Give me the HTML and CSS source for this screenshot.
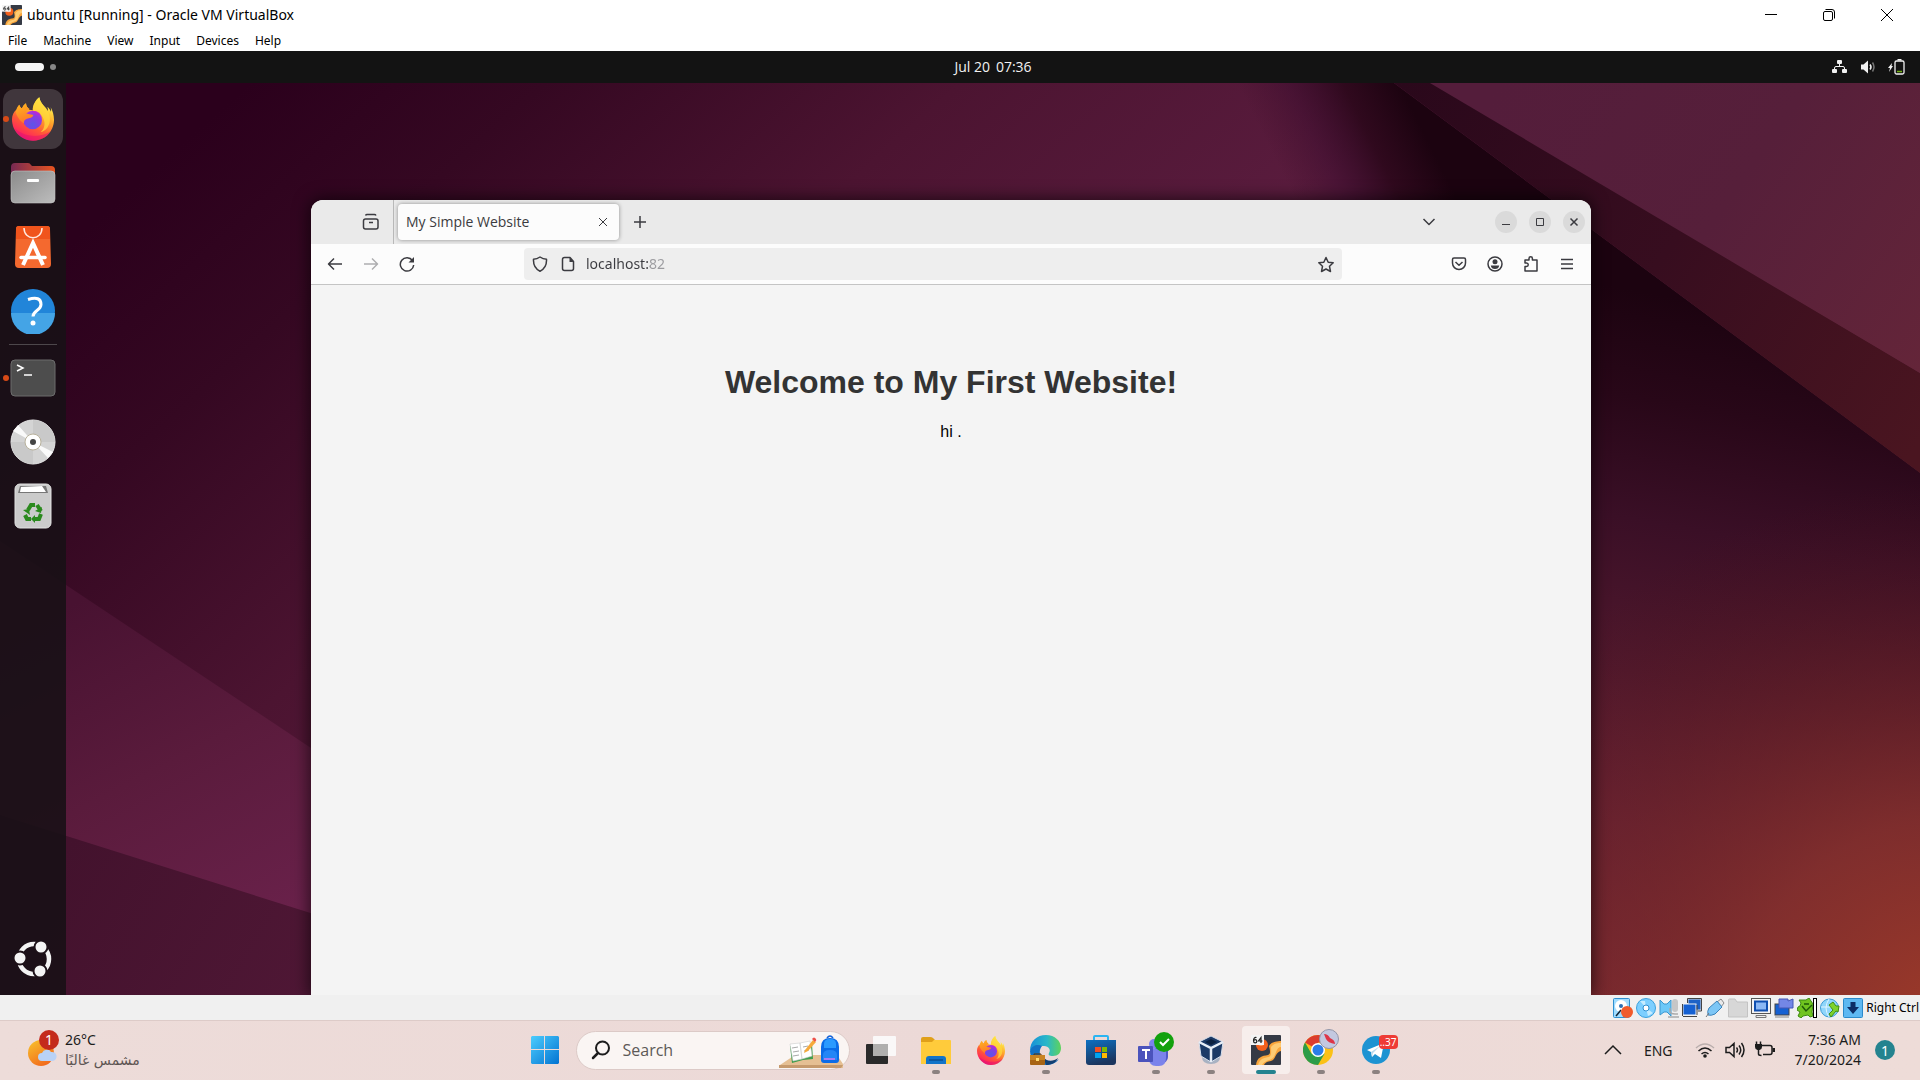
FILE: index.html
```html
<!DOCTYPE html>
<html lang="en">
<head>
<meta charset="utf-8">
<title>ubuntu [Running] - Oracle VM VirtualBox</title>
<link rel="stylesheet" href="styles.css">
</head>
<body>
<svg class="defs" width="0" height="0" aria-hidden="true">
  <defs>
    <linearGradient id="ffBody" x1="0.8" y1="0" x2="0.25" y2="1"><stop offset="0.1" stop-color="#fff44f"/><stop offset="0.4" stop-color="#ffa52a"/><stop offset="0.65" stop-color="#ff5a36"/><stop offset="0.85" stop-color="#ff2f55"/><stop offset="1" stop-color="#e0108a"/></linearGradient>
    <radialGradient id="ffGlobe" cx="0.5" cy="0.75" r="0.8"><stop offset="0" stop-color="#5c55e8"/><stop offset="0.6" stop-color="#8a3be0"/><stop offset="1" stop-color="#b833e1"/></radialGradient>
    <linearGradient id="ffHead" x1="0" y1="0" x2="0.3" y2="1"><stop offset="0" stop-color="#ffb61e"/><stop offset="1" stop-color="#ff7a2a"/></linearGradient>
  </defs>
  <symbol id="firefox" viewBox="0 0 126 130">
    <path fill="url(#ffBody)" d="M22 22c2 7 5 10 8 11 3-7 7-12 12-15 0 8 5 14 10 19l10 2C62 22 72 8 82 0c2 14 11 23 20 33l5 9c1-5 1-9-1-14 5 3 8 9 11 15 1-5 0-9-1-13 10 18 14 42 5 62-11 25-33 38-58 38C28 130 0 102 0 66c0-12 5-21 11-28 1 3 1 5 2 6 1-8 4-16 9-22z"/>
    <path fill="#ffd93b" opacity=".75" d="M82 0c2 14 11 23 20 33 14 18 16 42 4 58-6 8-14 12-20 13 14-10 16-34 2-50-8-7-20-10-25-15C62 22 72 8 82 0z"/>
    <circle cx="62" cy="68" r="28" fill="url(#ffGlobe)"/>
    <path fill="url(#ffHead)" d="M22 22c2 7 5 10 8 11 3-7 7-12 12-15 0 8 5 14 11 17-9 1-12 7-12 12 7 5 15 3 23 6-2 8-12 10-19 11-7 2-10 7-9 14-8-4-20-16-25-34 1-8 5-16 11-22z"/>
    <path fill="#c21fd0" opacity=".6" d="M60 42c14-4 26 4 29 16-6-6-11-6-16-5z"/>
    <path fill="#e4106f" opacity=".5" d="M8 92c20 24 74 34 108 10-12 19-31 28-53 28-24 0-44-13-55-38z"/>
  </symbol>
  <symbol id="vmlogo" viewBox="0 0 30 30">
    <rect width="30" height="30" rx="1" fill="#353a45"/>
    <path d="M5 30c1-8 6-9 12-10 3-1 2-5 1-9 2-4 8-5 12-5v10c-5 1-5 6-8 9-3 2-7 1-9 5z" fill="#f9a53c"/>
    <path d="M7 30c2-7 6-7 11-8 3-2 2-6 2-10 3-4 7-4 10-4v4c-5 0-5 8-8 11-4 3-8 2-11 7z" fill="#ffdc8c" opacity=".7"/>
    <circle cx="11" cy="10" r="6" fill="#f4601c"/><circle cx="10" cy="8" r="3" fill="#ff9a5c"/>
    <rect width="13" height="10" fill="#f4f4f4"/>
    <path d="M5.500 2.500Q2.500 2 2.500 6M10 8V2.500L7.500 6H11.500" stroke="#222" stroke-width="1.200" fill="none"/><circle cx="4.200" cy="6.200" r="1.600" stroke="#222" stroke-width="1.200" fill="none"/>
  </symbol>
</svg>

<header class="host-title">
  <svg class="host-logo" viewBox="0 0 30 30" width="20" height="20"><use href="#vmlogo"/></svg>
  <span class="host-name">ubuntu [Running] - Oracle VM VirtualBox</span>
  <div class="host-controls">
    <button aria-label="Minimize"><svg width="16" height="16" viewBox="0 0 16 16"><path d="M2 7.500h12" class="ln"/></svg></button>
    <button aria-label="Restore"><svg width="16" height="16" viewBox="0 0 16 16"><rect x="2.500" y="4.500" width="9" height="9" rx="1.500" class="ln"/><path d="M4.500 2.500h6.500a2.500 2.500 0 0 1 2.500 2.500v6.500" class="ln"/></svg></button>
    <button aria-label="Close"><svg width="16" height="16" viewBox="0 0 16 16"><path d="M2 2l12 12M14 2L2 14" class="ln"/></svg></button>
  </div>
</header>
<nav class="host-menu">
  <button>File</button><button>Machine</button><button>View</button><button>Input</button><button>Devices</button><button>Help</button>
</nav>

<main class="guest">
  <div class="panel">
    <button class="workspaces" aria-label="Activities"><span class="pill"></span><span class="dot"></span></button>
    <button class="panel-clock"><span>Jul 20</span><span>07:36</span></button>
    <div class="panel-tray">
      <svg width="16" height="16" viewBox="0 0 16 16" fill="#f2f2f2"><rect x="5" y="1" width="5" height="4" rx="1"/><rect x="0" y="10" width="5" height="4" rx="1"/><rect x="10" y="10" width="5" height="4" rx="1"/><path d="M7.500 4v3.500M2.500 11V9q0-1.500 1.500-1.500h7q1.500 0 1.500 1.500v2" stroke="#f2f2f2" fill="none"/></svg>
      <svg width="16" height="16" viewBox="0 0 16 16"><path d="M1 5.500h2.500L8 1.500v13L3.500 10.500H1z" fill="#f2f2f2"/><path d="M10 5.500q2 2.500 0 5" stroke="#f2f2f2" fill="none" stroke-width="1.500"/><path d="M12.500 3.500q3 4.500 0 9" stroke="#777" fill="none" stroke-width="1.500"/></svg>
      <svg width="17" height="16" viewBox="0 0 17 16"><path d="M4 4L0 9h2l-1 4 4-6H3.500z" fill="#f2f2f2"/><path d="M9.500 0h4v1.500h-4z" fill="#f2f2f2"/><rect x="7" y="2" width="9" height="13" rx="1.500" fill="none" stroke="#f2f2f2" stroke-width="1.300"/><path d="M9 12.500h5" stroke="#73b312" stroke-width="1.500"/></svg>
    </div>
  </div>

  <div class="desktop">
    <svg class="wallpaper" viewBox="0 83 1920 912" preserveAspectRatio="none" aria-hidden="true">
      <defs>
        <linearGradient id="base" gradientUnits="userSpaceOnUse" x1="230" y1="100" x2="760" y2="690"><stop offset="0" stop-color="#2b001c"/><stop offset="0.25" stop-color="#350822"/><stop offset="0.6" stop-color="#4c1431"/><stop offset="1" stop-color="#5a1c3e"/></linearGradient>
        <linearGradient id="fold" gradientUnits="userSpaceOnUse" x1="1400" y1="85" x2="1270" y2="150"><stop offset="0" stop-color="#1c0310"/><stop offset="0.35" stop-color="#2b071a" stop-opacity=".9"/><stop offset="0.7" stop-color="#35092a" stop-opacity=".4"/><stop offset="1" stop-color="#3b0c26" stop-opacity="0"/></linearGradient>
        <linearGradient id="lower" gradientUnits="userSpaceOnUse" x1="1690" y1="300" x2="1560" y2="1040"><stop offset="0" stop-color="#1c0310"/><stop offset="0.14" stop-color="#280718"/><stop offset="0.3" stop-color="#3a0f26"/><stop offset="0.5" stop-color="#50182d"/><stop offset="0.7" stop-color="#6b2336"/><stop offset="0.95" stop-color="#862f39"/></linearGradient>
        <radialGradient id="ember" gradientUnits="userSpaceOnUse" cx="1960" cy="1040" r="560"><stop offset="0" stop-color="#a03b28"/><stop offset="0.4" stop-color="#84302b" stop-opacity=".8"/><stop offset="1" stop-color="#4c1216" stop-opacity="0"/></radialGradient>
        <linearGradient id="band" gradientUnits="userSpaceOnUse" x1="1400" y1="83" x2="1920" y2="440"><stop offset="0" stop-color="#2a081b"/><stop offset="0.5" stop-color="#370d1f"/><stop offset="1" stop-color="#4a1520"/></linearGradient>
        <linearGradient id="roof" gradientUnits="userSpaceOnUse" x1="1500" y1="83" x2="1920" y2="373"><stop offset="0" stop-color="#541d3b"/><stop offset="0.5" stop-color="#561f3a"/><stop offset="1" stop-color="#642539"/></linearGradient>
        <linearGradient id="wing" gradientUnits="userSpaceOnUse" x1="100" y1="590" x2="270" y2="920"><stop offset="0" stop-color="#481231"/><stop offset="0.5" stop-color="#5a1b3c"/><stop offset="1" stop-color="#69214a"/></linearGradient>
        <linearGradient id="floor" gradientUnits="userSpaceOnUse" x1="66" y1="850" x2="311" y2="995"><stop offset="0" stop-color="#43122d"/><stop offset="1" stop-color="#4f1735"/></linearGradient>
      </defs>
      <path d="M0 83h1920v912H0z" fill="url(#base)"/>
      <path d="M1100 83h294l526 390V650L1100 420z" fill="url(#fold)"/>
      <path d="M1500 162L1920 473V995H1500z" fill="url(#lower)"/>
      <path d="M1500 162L1920 473V995H1500z" fill="url(#ember)"/>
      <path d="M1394 83h40L1920 373v100z" fill="url(#band)"/>
      <path d="M1430 83h490v290z" fill="url(#roof)"/>
      <path d="M0 541L320 754V920L0 815z" fill="url(#wing)"/>
      <path d="M0 815L320 916v79H0z" fill="url(#floor)"/>
    </svg>

    <nav class="dock" aria-label="Dock">
      <button class="app active running" aria-label="Firefox"><svg width="42" height="44"><use href="#firefox"/></svg></button>
      <button class="app" aria-label="Files"><svg width="46" height="42" viewBox="0 0 46 42"><defs><linearGradient id="fb"><stop offset="0" stop-color="#772953"/><stop offset="1" stop-color="#e95420"/></linearGradient><linearGradient id="ff" x2="1" y2="1"><stop offset="0" stop-color="#8b8b8b"/><stop offset="1" stop-color="#bdbdbd"/></linearGradient></defs><path d="M1 20V5q0-4 4-4h13q2 0 3 2l1 1h19q4 0 4 4v12z" fill="url(#fb)"/><rect x="1" y="9" width="44" height="32" rx="4" fill="url(#ff)" stroke="#c4c4c4" stroke-width=".6"/><rect x="17" y="17" width="12" height="3" rx="1" fill="#fff"/></svg></button>
      <button class="app" aria-label="App Center"><svg width="38" height="44" viewBox="0 0 38 44"><path d="M5 1h28q3 0 3 3l1 35q0 4-4 4H5q-4 0-4-4L2 4q0-3 3-3z" fill="#f4692f"/><path d="M5 1h28q3 0 3 3v10H2V4q0-3 3-3z" fill="#f0541c"/><path d="M10 3c0 13 18 13 18 0" fill="none" stroke="#ffe9df" stroke-width="1.500"/><path d="M9 40L19 18l10 22" fill="none" stroke="#fff" stroke-width="4"/><path d="M7 32.500h24" stroke="#fff" stroke-width="3.500" stroke-linecap="round"/></svg></button>
      <button class="app" aria-label="Help"><svg width="46" height="46" viewBox="0 0 46 46"><circle cx="23" cy="23" r="22" fill="#2185d9"/><path d="M1 25a22 22 0 0 0 44 0z" fill="#44a4e6"/><path d="M18 11.500q13-4 13 5c0 6-8 6-8 12" fill="none" stroke="#fff" stroke-width="3"/><circle cx="23" cy="35" r="2.500" fill="#fff"/></svg></button>
      <hr>
      <button class="app running" aria-label="Terminal"><svg width="46" height="38" viewBox="0 0 46 38"><rect x="1" y="1" width="44" height="36" rx="4" fill="#4d4d4d" stroke="#6c6c6c"/><path d="M7 6l6 3-6 3M14 16h8" fill="none" stroke="#fff" stroke-width="1.500"/></svg></button>
      <button class="app" aria-label="Disc"><svg width="46" height="46" viewBox="0 0 46 46"><circle cx="23" cy="23" r="22" fill="#d4d4d4" stroke="#e8e8e8"/><path d="M23 23V1a22 22 0 0 1 22 22zM23 23v22A22 22 0 0 1 1 23z" fill="#c9c9c9"/><path d="M23 23L3 12l5-6zM23 23l20 10-5 6z" fill="#fafafa"/><circle cx="23" cy="23" r="8" fill="#fff" stroke="#b8b19b"/><circle cx="23" cy="23" r="3" fill="#444"/></svg></button>
      <button class="app" aria-label="Trash"><svg width="38" height="46" viewBox="0 0 38 46"><rect x="1" y="1" width="36" height="44" rx="5" fill="#cbcbcb" stroke="#e2e2e2"/><path d="M6 3h26l2 7H4z" fill="#777"/><path d="M7 4l21-1 4 6H6z" fill="#fff"/><g fill="none" stroke="#2b8a1e" stroke-width="4"><path d="M14 27l3-5h4M23 22l4 6M27 31l-2 5h-4M17 36h-4l-2-4"/></g><path d="M21 32v8l-4-4zM28 24l-1 6-6-2zM9 27l6-1 1 6z" fill="#2b8a1e"/></svg></button>
      <button class="app launcher" aria-label="Show apps"><svg width="38" height="36" viewBox="0 0 38 36"><circle cx="20" cy="18" r="15" fill="none" stroke="#f4f4f4" stroke-width="4.500"/><g fill="#f4f4f4" stroke="#1d1118" stroke-width="2"><circle cx="6" cy="17" r="6.500"/><circle cx="27" cy="6" r="6.500"/><circle cx="26" cy="30" r="6.500"/></g></svg></button>
    </nav>

    <div class="workspace">
      <section class="browser">
        <div class="tabs">
          <button class="icon-btn view-btn" aria-label="Firefox View"><svg width="18" height="18" viewBox="0 0 18 18"><rect x="1.500" y="6" width="14.500" height="10" rx="2" class="st"/><path d="M3.500 2.500Q4 1.500 5 1.500h7.500q1 0 1.500 1M7 9.500h4" class="st"/></svg></button>
          <div class="tab"><span>My Simple Website</span><button class="tab-close" aria-label="Close tab"><svg width="10" height="10" viewBox="0 0 10 10"><path d="M1 1l8 8M9 1L1 9" class="st thin"/></svg></button></div>
          <button class="icon-btn" aria-label="New tab"><svg width="14" height="14" viewBox="0 0 14 14"><path d="M7 1v12M1 7h12" class="st"/></svg></button>
          <button class="icon-btn list-tabs" aria-label="List all tabs"><svg width="14" height="14" viewBox="0 0 14 14"><path d="M1.500 4L7 9.500 12.500 4" class="st"/></svg></button>
          <div class="win-btns">
            <button aria-label="Minimize"><svg width="10" height="10" viewBox="0 0 10 10"><path d="M1 7.500h8" class="st thin"/></svg></button>
            <button aria-label="Maximize"><svg width="10" height="10" viewBox="0 0 10 10"><rect x="1.500" y="1.500" width="7" height="7" class="st thin"/></svg></button>
            <button aria-label="Close"><svg width="10" height="10" viewBox="0 0 10 10"><path d="M1.500 1.500l7 7M8.500 1.500l-7 7" class="st"/></svg></button>
          </div>
        </div>
        <div class="toolbar">
          <div class="tools">
            <button class="icon-btn" aria-label="Back"><svg width="16" height="16" viewBox="0 0 16 16"><path d="M15 8H2M7 2.500L1.500 8 7 13.500" class="st"/></svg></button>
            <button class="icon-btn off" aria-label="Forward"><svg width="16" height="16" viewBox="0 0 16 16"><path d="M1 8h13M9 2.500L14.500 8 9 13.500" class="st"/></svg></button>
            <button class="icon-btn" aria-label="Reload"><svg width="16" height="16" viewBox="0 0 16 16"><path d="M13.500 4.500A6.700 6.700 0 1 0 14.700 9" class="st"/><path d="M15 1v5.500H9.500z" fill="#3b3b40"/></svg></button>
          </div>
          <div class="urlbar">
            <svg width="16" height="16" viewBox="0 0 16 16"><path d="M8 1q3 2 6.500 2.200Q15 12 8 15.200 1 12 1.500 3.200 5 3 8 1z" class="st"/></svg>
            <svg width="16" height="16" viewBox="0 0 16 16"><path d="M10 1.500H4.500Q2.500 1.500 2.500 3.500v9q0 2 2 2h7q2 0 2-2V5.500z" class="st"/><path d="M9.500 1.500v4.500h4z" fill="#3b3b40"/></svg>
            <input type="text" value="localhost:82" aria-label="Address">
            <button class="star" aria-label="Bookmark this page"><svg width="18" height="17" viewBox="0 0 18 17"><path d="M9 1.500l2.200 4.700 5 .6-3.700 3.500 1 5.200L9 13l-4.500 2.500 1-5.200L1.800 6.800l5-.6z" class="st"/></svg></button>
          </div>
          <div class="tools">
            <button class="icon-btn" aria-label="Pocket"><svg width="16" height="16" viewBox="0 0 16 16"><path d="M1.500 3.500q0-1.500 1.500-1.500h10q1.500 0 1.500 1.500V7a6.500 6.500 0 0 1-13 0zM4.500 6L8 9.300 11.500 6" class="st"/></svg></button>
            <button class="icon-btn" aria-label="Account"><svg width="16" height="16" viewBox="0 0 16 16"><circle cx="8" cy="8" r="7" class="st"/><circle cx="8" cy="5.700" r="2.500" fill="#3b3b40"/><path d="M3.800 9.500h8.400q-.5 3.500-4.200 3.500t-4.200-3.500z" fill="#3b3b40"/></svg></button>
            <button class="icon-btn" aria-label="Extensions"><svg width="16" height="16" viewBox="0 0 16 16"><path d="M2 15v-4.500h1.500a1.700 1.700 0 0 0 0-3.500H2V4h4V2.500a1.700 1.700 0 0 1 3.400 0V4H14v11z" class="st"/></svg></button>
            <button class="icon-btn" aria-label="Menu"><svg width="14" height="14" viewBox="0 0 14 14"><path d="M1 2.500h12M1 7h12M1 11.500h12" class="st"/></svg></button>
          </div>
        </div>
        <article class="site">
          <h1>Welcome to My First Website!</h1>
          <p>hi .</p>
        </article>
      </section>
    </div>
  </div>
</main>

<div class="vm-status">
  <svg width="20" height="20" viewBox="0 0 20 20"><rect x=".5" y=".5" width="16" height="19" rx="1" fill="#9fdcff" stroke="#2f8fd0"/><circle cx="8" cy="8" r="6" fill="#fff"/><circle cx="8" cy="8" r="2" fill="#2a6fb5"/><path d="M3 18l5-6" stroke="#123" stroke-width="1.500"/><circle cx="14" cy="14" r="6" fill="#f05b2c"/></svg>
  <svg width="20" height="20" viewBox="0 0 20 20"><circle cx="10" cy="10" r="9.500" fill="#7ccfff" stroke="#3ba0dc"/><path d="M10 10L4 3h5zM10 10l7 5-5 3z" fill="#c6ecff"/><circle cx="10" cy="10" r="3" fill="#fff" stroke="#2f8fd0"/></svg>
  <svg width="20" height="20" viewBox="0 0 20 20"><path d="M1 2l4 4h3l4-4v16l-4-4H5l-4 3z" fill="#6cc8f8" stroke="#3a96cf"/><rect x="13" y="1" width="6" height="13" rx="3" fill="#c6c6c6"/><path d="M11 10v3q0 3 5 3h3M9 19h11" stroke="#aaa" stroke-width="1.500" fill="none"/></svg>
  <svg width="20" height="20" viewBox="0 0 20 20"><rect x="6" y="1" width="13" height="11" fill="#1d62c6" stroke="#ddd"/><rect x="1" y="6" width="13" height="11" fill="#1561d2" stroke="#f4f4f4"/><path d="M1 18.500h14M5.500 5V.5h14V13H16M.5 6v12M15 7v10" stroke="#444" fill="none"/></svg>
  <svg width="20" height="20" viewBox="0 0 20 20"><path d="M12 4l4-3 3 4-3 4z" fill="#e9e9e9" stroke="#8a8a8a"/><path d="M12 3l5 6-7 7q-4 2-7 1-1-4 1-7z" fill="#7cc6f5" stroke="#3a83bb"/><path d="M1 19l3-4" stroke="#777"/></svg>
  <svg width="20" height="20" viewBox="0 0 20 20"><path d="M.5 19V2q0-1 1-1H7l2 3h10.500v15z" fill="#d7d7d7" stroke="#c3c3c3"/></svg>
  <svg width="20" height="20" viewBox="0 0 20 20"><rect x=".5" y=".5" width="19" height="15" fill="#f4f4f4" stroke="#555"/><rect x="4" y="3.500" width="12" height="9" fill="#8bb8f4" stroke="#0f4fb0" stroke-width="2"/><path d="M5 17.500h10v2H5z" fill="#eee" stroke="#777"/></svg>
  <svg width="20" height="20" viewBox="0 0 20 20"><rect x="1" y="6" width="14" height="11" fill="#1561d2" stroke="#444"/><path d="M5 1h9v2l5-2v9H5z" fill="#7487e6" stroke="#4657b5"/><path d="M1 19h14" stroke="#888"/></svg>
  <svg width="20" height="20" viewBox="0 0 20 20"><path d="M9 2l3-2 2 3 2 3-1 8 1 4-3 1-2-2-5 1-2 2-3-2 2-4-3-2 1-3 2-1 1-3-2-3z" fill="#6fc41f" stroke="#3d8a12"/><path d="M5 8l4 5 6-6M7 6h5" stroke="#1e5a08" fill="none" stroke-width="1.500"/><rect x="16.500" y=".5" width="3" height="19" fill="#fff" stroke="#000"/></svg>
  <svg width="20" height="20" viewBox="0 0 20 20"><circle cx="9.500" cy="10" r="9" fill="#8fd6fb" stroke="#3a9bd6"/><path d="M9 1q-6 9 0 18M1 9h17" stroke="#dff4ff" fill="none"/><path d="M9 7l4-3 3 4 3 0-1 6-2-1-5 6-2-3 4-4z" fill="#7ed22b" stroke="#3f8f12"/></svg>
  <svg width="20" height="20" viewBox="0 0 20 20"><rect x=".5" y=".5" width="19" height="19" rx="1" fill="#5db8f2" stroke="#2b8acb"/><path d="M7.500 4h5v5H16l-6 7-6-7h3.500z" fill="#0b2d66"/></svg>
  <span>Right Ctrl</span>
</div>

<footer class="taskbar">
  <button class="weather">
    <span class="weather-icon">
      <svg width="30" height="28" viewBox="0 0 30 28"><defs><linearGradient id="sun" x1="0" y1="0" x2=".6" y2="1"><stop offset="0" stop-color="#f8c52c"/><stop offset="1" stop-color="#f26b1d"/></linearGradient></defs><circle cx="13" cy="13" r="13" fill="url(#sun)"/><path d="M14 21a4 4 0 0 1 0-8 5 5 0 0 1 9-1 4 4 0 0 1 2 9z" fill="#b9d2f6"/></svg>
      <span class="badge">1</span>
    </span>
    <span class="weather-text"><span>26°C</span><span class="sub" lang="ar" dir="rtl">مشمس غالبًا</span></span>
  </button>

  <div class="pins">
    <button class="pin" aria-label="Start"><svg width="30" height="30" viewBox="0 0 30 30"><defs><linearGradient id="win" gradientUnits="userSpaceOnUse" x2="30" y2="30"><stop offset="0" stop-color="#4fd0ff"/><stop offset="1" stop-color="#0070d0"/></linearGradient></defs><path d="M2 1h12v13H1V2zM15 1h13l1 1v12H15zM1 15h13v14H2l-1-1zM15 15h14v13l-1 1H15z" fill="url(#win)"/></svg></button>
    <label class="search">
      <svg width="20" height="20" viewBox="0 0 20 20"><circle cx="11.500" cy="8" r="6.500" fill="none" stroke="#1c1c1c" stroke-width="2"/><path d="M7 13l-5 5" stroke="#1c1c1c" stroke-width="2.500" stroke-linecap="round"/></svg>
      <input type="search" placeholder="Search" aria-label="Search">
      <svg class="art" width="66" height="34" viewBox="0 0 66 34"><path d="M16 20h42l6 9v4H1v-3z" fill="#e5bf93"/><path d="M0 30h64l-2 3H0z" fill="#c69a6d"/><path d="M11 11l10-2 12 0 1 15-10 1-11 3z" fill="#3e9d4d"/><path d="M11 9l10-1 2 16-9 2zM21 8l10-2 2 15-10 3z" fill="#fff" stroke="#ccc" stroke-width=".6"/><path d="M13 13l6-1M14 17l6-1M14 21l6-1M24 12l5-1M25 16l5-1" stroke="#aaa"/><path d="M26 15l8-10 3 2-8 9-4 2z" fill="#f6a93a"/><path d="M33 4q2-3 4 0 1 1-1 3z" fill="#ee5148"/><path d="M48 3q3-4 6 0" stroke="#1360d6" fill="none" stroke-width="1.500"/><path d="M42 12q0-9 9-9t9 9v13q0 3-3 3H45q-3 0-3-3z" fill="#0a6ce8"/><path d="M45 9q0-5 6-5t6 5v4H45z" fill="#2a9aff"/><path d="M44 20q0-5 7-5t7 5v5H44z" fill="#2386f6"/><path d="M45 24h11" stroke="#a57cf5" stroke-width="2"/></svg>
    </label>
    <button class="pin" aria-label="Task View"><svg width="30" height="28" viewBox="0 0 30 28"><rect y="8" width="22" height="20" rx="1" fill="#2a2a2a"/><rect x="7" width="23" height="20" rx="1" fill="#fbfbfb" opacity=".92"/><path d="M7 8h15v12H7z" fill="#b0afae"/></svg></button>
    <button class="pin open" aria-label="File Explorer"><svg width="30" height="27" viewBox="0 0 30 27"><path d="M0 7V2q0-2 2-2h7q2 0 3 1l2 2h14v6H0z" fill="#e0a01a"/><path d="M0 5h11l2-2h16q1 0 1 1v23H0z" fill="#ffcb3b"/><path d="M5 27v-5q0-3 3-3h14q3 0 3 3v5z" fill="#1374c9"/><path d="M8 23h14" stroke="#0c4f92" stroke-width="1.500"/></svg></button>
    <button class="pin" aria-label="Firefox"><svg width="28" height="29"><use href="#firefox"/></svg></button>
    <button class="pin open" aria-label="Microsoft Edge"><svg width="31" height="30" viewBox="0 0 31 30"><defs><linearGradient id="edge" x2="1"><stop offset="0" stop-color="#168fd8"/><stop offset=".55" stop-color="#2ab8c8"/><stop offset="1" stop-color="#5ed35c"/></linearGradient></defs><path d="M0 16C0 6 7 0 16 0s15 6 15 13c0 5-3 8-8 8-4 0-5-1-4-3 2-3 0-7-5-7S1 13 0 16z" fill="url(#edge)"/><path d="M0 16c2-6 8-7 12-5-5 6-1 16 9 16 3 0 6-1 8-3-3 4-8 6-13 6C7 30 0 24 0 16z" fill="#1272c4"/><path d="M13 21c3 6 10 6 15 2-2 5-7 7-12 7z" fill="#123f72"/><rect y="20" width="15" height="10" rx="1" fill="#a86414"/><path d="M0 20h15v5H0z" fill="#c98322"/><path d="M4 20v-1h7v1" stroke="#5c3206" fill="none"/><rect x="6" y="23" width="3" height="3" fill="#ffd96b"/></svg></button>
    <button class="pin" aria-label="Microsoft Store"><svg width="30" height="30" viewBox="0 0 30 30"><defs><linearGradient id="store" y1="0" y2="1" x2=".3"><stop offset="0" stop-color="#0d70c2"/><stop offset="1" stop-color="#1b355e"/></linearGradient></defs><path d="M8 6V2q0-1 1-1h12q1 0 1 1v4" fill="none" stroke="#2bb5f2" stroke-width="2"/><path d="M0 5h30v22q0 3-3 3H3q-3 0-3-3z" fill="url(#store)"/><path d="M9 12h6v5H9z" fill="#f25022"/><path d="M16 12h5v5h-5z" fill="#7fba00"/><path d="M9 18h6v5H9z" fill="#00a4ef"/><path d="M16 18h5v5h-5z" fill="#ffb900"/></svg></button>
    <button class="pin open" aria-label="Teams"><svg width="36" height="42" viewBox="0 0 36 42"><rect x="17" y="14" width="13" height="20" rx="6" fill="#5059c9"/><circle cx="16" cy="15" r="5" fill="#7b83eb"/><path d="M11 20h17v9q0 8-7 8h-3q-7 0-7-8z" fill="#7b83eb"/><rect x="0" y="17" width="15" height="16" rx="1" fill="#4b53bc"/><path d="M4 21h8M8 21v9" stroke="#fff" stroke-width="2"/><circle cx="26" cy="13" r="10" fill="#13a10e"/><path d="M22 13l3 3 6-6" fill="none" stroke="#fff" stroke-width="2"/></svg></button>
    <button class="pin open" aria-label="VirtualBox"><svg width="26" height="30" viewBox="0 0 26 30"><path d="M4 22q9 5 18 0 0 7-9 7t-9-7z" fill="#a8b2c2"/><path d="M13 1l12 6-2 14-10 6L3 21 1 7z" fill="#1c3a66" stroke="#d6deea"/><path d="M1 7l12 6 12-6M13 13v14" stroke="#e8eef6" stroke-width="2.500" fill="none"/><path d="M13 4l6 3-6 3-6-3z" fill="#0c2140"/></svg></button>
    <button class="pin current" aria-label="ubuntu [Running]"><svg width="30" height="30"><use href="#vmlogo"/></svg></button>
    <button class="pin open" aria-label="Google Chrome"><svg width="36" height="42" viewBox="0 0 36 42"><circle cx="15" cy="21" r="15" fill="#fbc116"/><path d="M15 21L2 13.500A15 15 0 0 1 28 13.500H15z" fill="#db3d2e"/><path d="M15 21l-6.500 3.800L2 13.500A15 15 0 0 0 15 36l6.500-11.200z" fill="#2c9c48"/><circle cx="15" cy="21" r="7" fill="#fff"/><circle cx="15" cy="21" r="5.500" fill="#2a7de8"/><circle cx="26" cy="10" r="9.500" fill="#c3c8e0" stroke="#9295a8"/><path d="M21 5q4 0 6 4 5 2 5 6-7-1-9-5z" fill="#dd3548"/></svg></button>
    <button class="pin open telegram" aria-label="Telegram"><svg width="28" height="28" viewBox="0 0 28 28"><circle cx="14" cy="14" r="14" fill="#1d93d2"/><path d="M5 14l17-7-3 15-6-4-3 3-1-5z" fill="#fff"/><path d="M9 16l9-6-7 7-1 4z" fill="#b9d9ec"/></svg><span class="count">..37</span></button>
  </div>

  <div class="tray">
    <button aria-label="Show hidden icons"><svg width="18" height="12" viewBox="0 0 18 12"><path d="M1 10l8-8 8 8" class="tr"/></svg></button>
    <button class="lang">ENG</button>
    <button class="status" aria-label="Network, volume and battery">
      <svg width="20" height="20" viewBox="0 0 20 20"><path d="M1 8q9-8 18 0" fill="none" stroke="#b9aeac" stroke-width="1.500"/><path d="M3.500 11q6.500-6 13 0M6.500 14q3.500-3 7 0" class="tr"/><circle cx="10" cy="16" r="1.800" fill="#1c1c1c"/></svg>
      <svg width="20" height="20" viewBox="0 0 20 20"><path d="M1 7.500h3.500L9 3.500v13L4.500 12.500H1zM11.500 7.500q2 2.500 0 5M14 5.500q3.500 4.500 0 9M16.500 3q5 7 0 14" class="tr"/></svg>
      <svg width="20" height="20" viewBox="0 0 20 20"><path d="M7 5.500h8q2 0 2 2v5q0 2-2 2H8" class="tr"/><path d="M17.500 8H20v4h-2.500z" fill="#1c1c1c"/><path d="M0 4h7v3q0 2.500-2.500 3h-2Q0 9.500 0 7z" fill="#1c1c1c"/><path d="M1.500 1.500V4M5.500 1.500V4M3.500 9v5q0 1.500 3 1.500" class="tr"/></svg>
    </button>
    <button class="clock"><span>7:36 AM</span><span>7/20/2024</span></button>
    <button class="notif" aria-label="1 new notification">1</button>
  </div>
</footer>
</body>
</html>
```
FILE: styles.css
```css
* { box-sizing: border-box; }
body {
  margin: 0;
  min-height: 100vh;
  display: flex;
  flex-direction: column;
  font-family: "Noto Sans", "Open Sans", sans-serif;
  font-size: 14px;
  color: #000;
  background: #efefef;
}
button {
  border: 0;
  padding: 0;
  background: none;
  font: inherit;
  color: inherit;
  display: flex;
  align-items: center;
  justify-content: center;
}
input { border: 0; padding: 0; background: none; font: inherit; outline: 0; min-width: 0; }
svg { display: block; flex: none; }
.defs { position: absolute; }
.ln { fill: none; stroke: #000; }
.st { fill: none; stroke: #3b3b40; stroke-width: 1.5; stroke-linejoin: round; }
.st.thin { stroke-width: 1; }
.tr { fill: none; stroke: #1c1c1c; stroke-width: 1.5; }

/* host window */
.host-title { height: 30px; display: flex; align-items: center; background: #fff; padding-left: 2px; }
.host-name { margin-left: 5px; line-height: 20px; }
.host-controls { display: flex; margin-left: auto; padding-right: 4px; }
.host-controls button { width: 58px; height: 28px; }
.host-menu { height: 21px; display: flex; gap: 16px; padding-left: 8px; background: #fff; font-size: 12px; line-height: 20px; }

/* guest screen */
.guest { flex: 1; display: flex; flex-direction: column; }
.panel {
  height: 32px;
  display: grid;
  grid-template-columns: 1fr auto 1fr;
  align-items: center;
  background: #131313;
  color: #f2f2f2;
}
.workspaces { justify-self: start; gap: 6px; padding-left: 15px; }
.pill { width: 29px; height: 8px; border-radius: 4px; background: #f4f4f4; }
.dot { width: 6px; height: 6px; border-radius: 50%; background: #888; }
.panel-clock { gap: 6px; padding: 0 0 2px 66px; font-family: "Open Sans", sans-serif; }
.panel-tray { justify-self: end; display: flex; gap: 12px; padding-right: 15px; }

.desktop { flex: 1; display: flex; position: relative; isolation: isolate; overflow: hidden; }
.wallpaper { position: absolute; inset: 0; width: 100%; height: 100%; z-index: -1; }
.dock {
  width: 66px;
  display: flex;
  flex-direction: column;
  align-items: center;
  gap: 4px;
  padding: 6px 0;
  background: rgba(24, 17, 22, .9);
}
.dock hr { width: 48px; height: 1px; margin: -1px 0; border: 0; background: #4d474b; }
.app { position: relative; width: 60px; height: 60px; border-radius: 12px; }
.app.active { background: #40363c; }
.app.running::before {
  content: "";
  position: absolute;
  left: 0;
  top: 27px;
  width: 6px;
  height: 6px;
  border-radius: 50%;
  background: #d84a17;
}
.launcher { margin-top: auto; }

.workspace { flex: 1; display: flex; padding: 117px 329px 0 245px; }
.browser {
  flex: 1;
  display: flex;
  flex-direction: column;
  border-radius: 12px 12px 0 0;
  overflow: hidden;
  background: #f4f4f4;
  color: #3b3b40;
  box-shadow: 0 0 16px 2px rgba(0, 0, 0, .6);
}
.tabs { height: 44px; display: flex; align-items: center; background: #eaeaea; padding-right: 6px; }
.icon-btn { width: 32px; height: 32px; }
.off { opacity: .4; }
.view-btn { width: 83px; height: 44px; padding-left: 38px; border-right: 1px solid #b9b9b9; }
.tab {
  width: 221px;
  height: 36px;
  margin: 0 5px 0 4px;
  padding: 0 11px 0 8px;
  display: flex;
  align-items: center;
  justify-content: space-between;
  border-radius: 4px;
  background: #fcfcfc;
  box-shadow: 0 0 4px rgba(0, 0, 0, .4);
}
.tab span { padding-bottom: 2px; font-family: "Open Sans", sans-serif; }
.list-tabs { margin-left: auto; margin-right: 50px; }
.win-btns { display: flex; gap: 12px; }
.win-btns button { width: 22px; height: 22px; border-radius: 50%; background: #dadada; }
.toolbar { height: 41px; display: flex; align-items: center; padding: 0 8px; background: #fcfcfc; border-bottom: 1px solid #c4c4c4; }
.tools { display: flex; gap: 4px; }
.urlbar { flex: 1; height: 32px; margin: 0 101px; padding: 0 7px 0 8px; display: flex; align-items: center; gap: 12px; border-radius: 4px; background: #eee; }
.urlbar input {
  flex: 1;
  height: 32px;
  margin-left: -2px;
  padding-bottom: 2px;
  color: transparent;
  background: linear-gradient(90deg, #3b3b40 64px, #9a9a9e 64px);
  -webkit-background-clip: text;
  background-clip: text;
}
.site { flex: 1; padding-top: 79px; text-align: center; font-family: "Liberation Sans", Arial, sans-serif; }
.site h1 { margin: 0 0 21px; font-size: 32px; line-height: 37px; color: #333; }
.site p { margin: 0; font-size: 16px; line-height: 20px; color: #000; }

/* host status bar */
.vm-status { height: 25px; display: flex; justify-content: flex-end; align-items: center; gap: 3px; background: #f0f0f0; font-size: 12px; padding-right: 1px; }

/* taskbar */
.taskbar {
  height: 60px;
  display: grid;
  grid-template-columns: 1fr auto 1fr;
  align-items: center;
  background: linear-gradient(90deg, #eddcd9, #ecd9d7 50%, #eedcd8);
  box-shadow: inset 0 1px #ddcbc8;
  color: #1c1c1c;
}
.weather { justify-self: start; gap: 7px; padding-left: 28px; }
.weather-icon { position: relative; padding-top: 8px; }
.badge {
  position: absolute;
  right: -1px;
  top: -2px;
  width: 20px;
  height: 20px;
  border-radius: 50%;
  background: #c42b1c;
  color: #fff;
  line-height: 20px;
}
.weather-text { display: flex; flex-direction: column; align-items: flex-start; line-height: 20px; }
.sub { font-family: "DejaVu Sans", sans-serif; color: #5d5553; }
.pins { display: flex; gap: 7px; align-items: center; }
.pin { position: relative; width: 48px; height: 48px; border-radius: 4px; }
.pin.open::after, .pin.current::after {
  content: "";
  position: absolute;
  bottom: 0;
  left: 20px;
  width: 8px;
  height: 4px;
  border-radius: 2px;
  background: #8b8180;
}
.pin.current { background: #f7eeec; }
.pin.current::after { left: 14px; width: 20px; background: #24838f; }
.count {
  position: absolute;
  right: 2px;
  top: 9px;
  padding: 0 1px;
  border-radius: 4px;
  background: #ee3b35;
  color: #fff;
  font-size: 10px;
  line-height: 14px;
}
.search {
  width: 274px;
  height: 39px;
  display: flex;
  align-items: center;
  gap: 12px;
  padding: 0 4px 0 14px;
  border: 1px solid #dccac7;
  border-radius: 20px;
  background: #faf5f3;
}
.search input { flex: 1; font-size: 16px; appearance: none; font-family: "Open Sans", sans-serif; }
.search input::placeholder { color: #5d5957; opacity: 1; }
.art { align-self: flex-end; }
.tray { justify-self: end; display: flex; align-items: center; padding-right: 25px; }
.lang { margin: 0 22px; }
.status { gap: 10px; }
.clock { flex-direction: column; align-items: flex-end; margin: 0 14px 0 20px; line-height: 20px; }
.notif { width: 20px; height: 20px; border-radius: 50%; background: #24838f; color: #fff; }
```
